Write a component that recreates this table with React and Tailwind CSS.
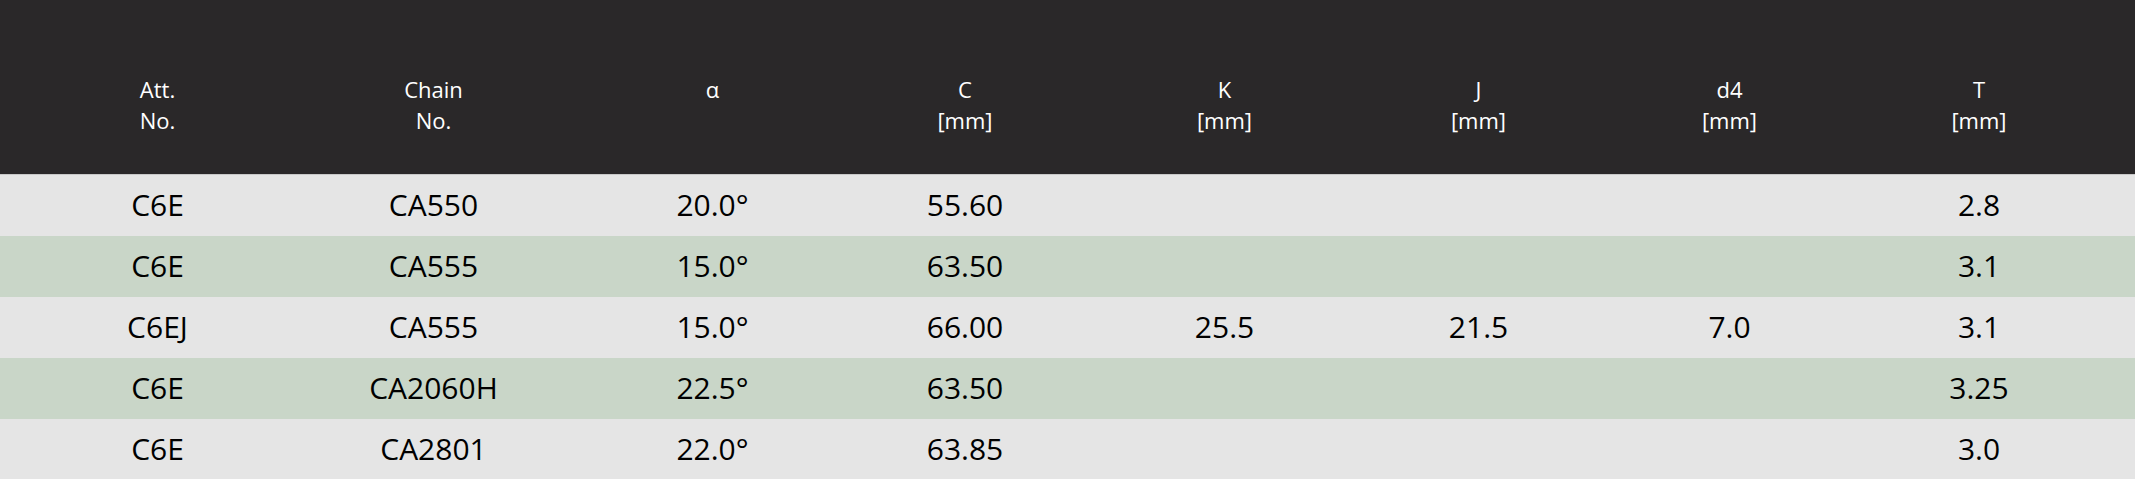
const columns = [
  { key: 'att', label: ['Att.', 'No.'] },
  { key: 'chain', label: ['Chain', 'No.'] },
  { key: 'alpha', label: ['α'] },
  { key: 'c', label: ['C', '[mm]'] },
  { key: 'k', label: ['K', '[mm]'] },
  { key: 'j', label: ['J', '[mm]'] },
  { key: 'd4', label: ['d4', '[mm]'] },
  { key: 't', label: ['T', '[mm]'] },
];

const rows = [
  { att: 'C6E', chain: 'CA550', alpha: '20.0°', c: '55.60', k: '', j: '', d4: '', t: '2.8' },
  { att: 'C6E', chain: 'CA555', alpha: '15.0°', c: '63.50', k: '', j: '', d4: '', t: '3.1' },
  { att: 'C6EJ', chain: 'CA555', alpha: '15.0°', c: '66.00', k: '25.5', j: '21.5', d4: '7.0', t: '3.1' },
  { att: 'C6E', chain: 'CA2060H', alpha: '22.5°', c: '63.50', k: '', j: '', d4: '', t: '3.25' },
  { att: 'C6E', chain: 'CA2801', alpha: '22.0°', c: '63.85', k: '', j: '', d4: '', t: '3.0' },
];

// column widths; some cells get a little padding so the text sits where the original does
const gridCols = 'grid grid-cols-[295px_277px_265px_256px_258px_253px_249px_282px]';
const pads = ['pl-[20px]', '', 'pl-[16px]', '', 'pl-[5px]', 'pl-[2px]', 'pl-[2px]', 'pr-[30px]'];

const App = () => {
  return (
    <div className="w-[2135px] h-[479px] overflow-hidden bg-[#e5e5e5] font-['Open_Sans',sans-serif]">
      {/* Header */}
      <div className={`${gridCols} h-[175px] bg-[#2a2829] border-b border-[#c8c8c8] pt-[74px]`}>
        {columns.map((col, i) => (
          <div key={col.key} className={`text-center text-white text-[22px] leading-[31px] ${pads[i]}`}>
            {col.label.map((line) => (
              <div key={line}>{line}</div>
            ))}
          </div>
        ))}
      </div>

      {/* Rows */}
      {rows.map((row, r) => (
        <div
          key={r}
          className={`${gridCols} h-[61px] items-center pb-[2px] ${r % 2 === 1 ? 'bg-[#c9d6c8]' : 'bg-[#e5e5e5]'}`}
        >
          {columns.map((col, i) => (
            <div key={col.key} className={`text-center text-black text-[30px] leading-none ${pads[i]}`}>
              {row[col.key]}
            </div>
          ))}
        </div>
      ))}
    </div>
  );
};

export default App;
